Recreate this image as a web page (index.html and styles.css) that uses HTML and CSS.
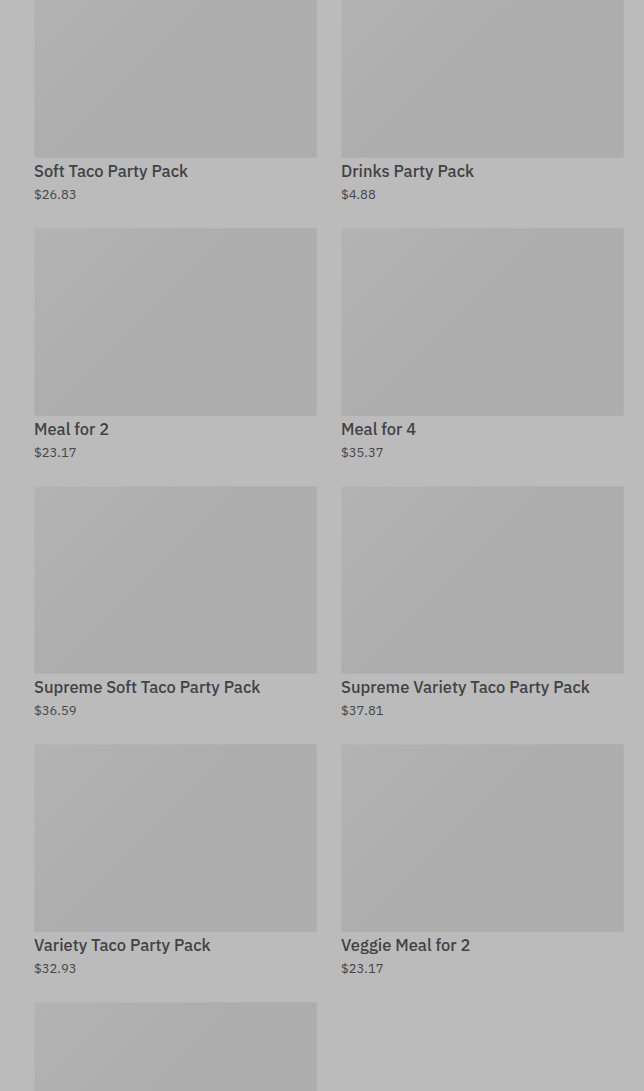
FILE: index.html
```html
<!DOCTYPE html>
<html lang="en">

<head>
    <meta charset="UTF-8">
    <meta name="viewport" content="width=device-width, initial-scale=1.0">
    <title>Party Packs</title>
    <link rel="stylesheet" href="styles.css">
</head>

<body>

    <div class="menu-grid">
        <div class="item">
            <div class="item-image"></div>
            <div class="item-name">Soft Taco Party Pack</div>
            <div class="item-price">$26.83</div>
        </div>
        <div class="item">
            <div class="item-image"></div>
            <div class="item-name">Drinks Party Pack</div>
            <div class="item-price">$4.88</div>
        </div>
        <div class="item">
            <div class="item-image"></div>
            <div class="item-name">Meal for 2</div>
            <div class="item-price">$23.17</div>
        </div>
        <div class="item">
            <div class="item-image"></div>
            <div class="item-name">Meal for 4</div>
            <div class="item-price">$35.37</div>
        </div>
        <div class="item">
            <div class="item-image"></div>
            <div class="item-name">Supreme Soft Taco Party Pack</div>
            <div class="item-price">$36.59</div>
        </div>
        <div class="item">
            <div class="item-image"></div>
            <div class="item-name">Supreme Variety Taco Party Pack</div>
            <div class="item-price">$37.81</div>
        </div>
        <div class="item">
            <div class="item-image"></div>
            <div class="item-name">Variety Taco Party Pack</div>
            <div class="item-price">$32.93</div>
        </div>
        <div class="item">
            <div class="item-image"></div>
            <div class="item-name">Veggie Meal for 2</div>
            <div class="item-price">$23.17</div>
        </div>
        <!-- next card, only its picture is in view -->
        <div class="item">
            <div class="item-image"></div>
        </div>
    </div>

</body>

</html>
```

FILE: styles.css
```css
body {
    font-family: "IBM Plex Sans", Roboto, "Liberation Sans", sans-serif;
    margin: 0;
    padding: 0;
    background-color: #bbbbbb;
    overflow: hidden;
    height: 1091px;
}

.menu-grid {
    display: grid;
    grid-template-columns: 1fr 1fr;
    column-gap: 24px;
    row-gap: 23px;
    padding: 0 20px 0 34px;
    margin-top: -30px;
}

.item-image {
    height: 188px;
    background: linear-gradient(135deg, #b3b3b3 0%, #adadad 45%, #adadad 100%);
    box-shadow: inset 0 0 0 1px rgba(255, 255, 255, 0.06);
}

.item-name {
    margin-top: 1px;
    font-size: 16.5px;
    font-weight: 500;
    line-height: 24px;
    color: #424242;
}

.item-price {
    margin-top: 2px;
    font-size: 13px;
    line-height: 20px;
    color: #464646;
}
```
